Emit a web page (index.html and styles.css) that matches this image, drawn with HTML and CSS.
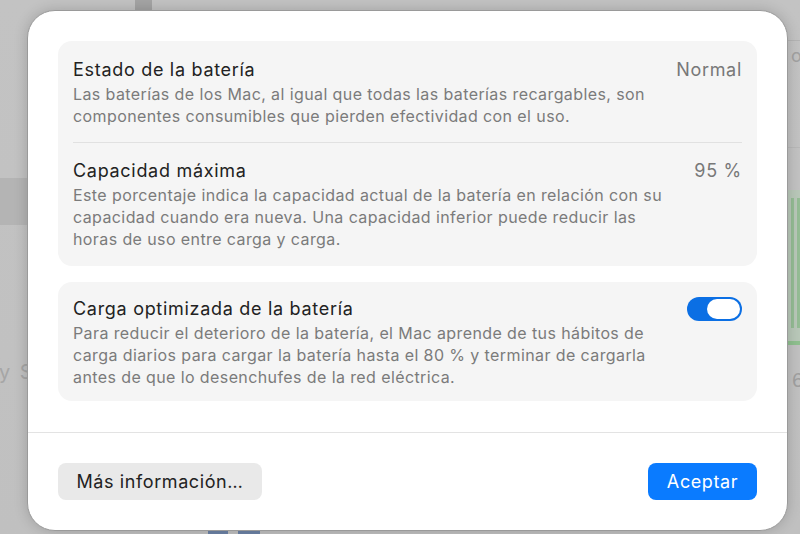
FILE: index.html
```html
<!DOCTYPE html>
<html lang="es">
<head>
<meta charset="utf-8">
<title>Estado de la batería</title>
<link rel="stylesheet" href="styles.css">
</head>
<body>
<div class="backdrop">
  <div class="bg-top-block"></div>
  <div class="bg-left-band"></div>
  <div class="bg-left-text">y S</div>
  <div class="bg-right-o">o</div>
  <div class="bg-right-line1"></div>
  <div class="bg-right-line2"></div>
  <div class="bg-right-green"><span></span><span></span></div>
  <div class="bg-right-6">6</div>
  <div class="bg-bottom-a"></div>
  <div class="bg-bottom-b"></div>
</div>

<div class="dialog">
  <div class="content">
    <section class="card card-first">
      <div class="row">
        <div class="text">
          <div class="title">Estado de la batería</div>
          <div class="desc">Las baterías de los Mac, al igual que todas las baterías recargables, son<br>componentes consumibles que pierden efectividad con el uso.</div>
        </div>
        <div class="value">Normal</div>
      </div>
      <div class="sep"></div>
      <div class="row">
        <div class="text">
          <div class="title">Capacidad máxima</div>
          <div class="desc">Este porcentaje indica la capacidad actual de la batería en relación con su<br>capacidad cuando era nueva. Una capacidad inferior puede reducir las<br>horas de uso entre carga y carga.</div>
        </div>
        <div class="value">95 %</div>
      </div>
    </section>
    <section class="card card-second">
      <div class="row">
        <div class="text">
          <div class="title">Carga optimizada de la batería</div>
          <div class="desc">Para reducir el deterioro de la batería, el Mac aprende de tus hábitos de<br>carga diarios para cargar la batería hasta el 80 % y terminar de cargarla<br>antes de que lo desenchufes de la red eléctrica.</div>
        </div>
        <div class="toggle"><div class="knob"></div></div>
      </div>
    </section>
  </div>
  <div class="footer">
    <button class="btn btn-secondary">Más información…</button>
    <button class="btn btn-primary">Aceptar</button>
  </div>
</div>
</body>
</html>
```

FILE: styles.css
```css
html, body {
  margin: 0;
  padding: 0;
}
body {
  width: 800px;
  height: 534px;
  overflow: hidden;
  position: relative;
  background: linear-gradient(180deg, #c3c3c3 0%, #c0c0c0 100%);
  font-family: "Inter", "Liberation Sans", sans-serif;
  padding-top: 10px;
  box-sizing: border-box;
}

/* blurred app behind the sheet */
.backdrop {
  position: absolute;
  inset: 0;
  z-index: 0;
}
.bg-top-block { position: absolute; left: 135px; top: 0; width: 17px; height: 10px; background: #a4a4a4; }
.bg-left-band { position: absolute; left: 0; top: 178px; width: 30px; height: 47px; background: #b4b4b4; }
.bg-left-text { position: absolute; left: -1px; top: 360px; font-size: 20px; color: #a6a6a6; letter-spacing: 2px; }
.bg-right-o { position: absolute; left: 791px; top: 45px; font-size: 18px; color: #a2a2a2; }
.bg-right-line1 { position: absolute; left: 780px; top: 40px; width: 20px; height: 1px; background: #b4b4b4; }
.bg-right-line2 { position: absolute; left: 780px; top: 147px; width: 20px; height: 1px; background: #b8b8b8; }
.bg-right-green {
  position: absolute; left: 780px; top: 190px; width: 20px; height: 155px;
  background: #b9c8b9; border-bottom: 4px solid #8fc08f;
  display: flex; gap: 3px; padding-left: 11px; box-sizing: border-box; padding-top: 8px;
}
.bg-right-green span { display: block; width: 3px; height: 130px; background: #95bd95; }
.bg-right-6 { position: absolute; left: 792px; top: 369px; font-size: 19px; color: #a0a0a0; }
.bg-bottom-a { position: absolute; left: 208px; top: 528px; width: 20px; height: 6px; background: #6c82a6; }
.bg-bottom-b { position: absolute; left: 238px; top: 528px; width: 22px; height: 6px; background: #6c82a6; }

/* sheet */
.dialog {
  position: relative;
  z-index: 1;
  margin-left: 27px;
  width: 761px;
  height: 521px;
  box-sizing: border-box;
  background: #ffffff;
  border: 1px solid #9a9a9a;
  border-radius: 28px;
  box-shadow: 0 0 14px rgba(0, 0, 0, 0.18);
  display: flex;
  flex-direction: column;
}
.content {
  padding: 30px 30px 0;
  display: flex;
  flex-direction: column;
  gap: 16px;
}
.card {
  background: #f5f5f5;
  border-radius: 14px;
  padding: 0 15px;
}
.card-first { padding-top: 16px; padding-bottom: 16px; }
.card-second { padding-top: 14px; padding-bottom: 13px; }

.row {
  display: flex;
  justify-content: space-between;
  align-items: flex-start;
}
.title {
  font-size: 18px;
  line-height: 26px;
  letter-spacing: 0.7px;
  color: #222222;
}
.desc {
  font-size: 16px;
  line-height: 22px;
  letter-spacing: 0.4px;
  color: #7b7b7b;
}
.value {
  font-size: 18px;
  line-height: 26px;
  letter-spacing: 0.7px;
  color: #787878;
}
.sep {
  height: 1px;
  background: #e1e1e1;
  margin: 15px 0 15px;
}

.toggle {
  margin-top: 1px;
  width: 55px;
  height: 24px;
  border-radius: 12px;
  background: #0b6fe4;
  display: flex;
  justify-content: flex-end;
  align-items: center;
  padding: 0 2px;
  box-sizing: border-box;
}
.knob {
  width: 33px;
  height: 20px;
  border-radius: 10px;
  background: #ffffff;
}

.footer {
  margin-top: 31px;
  border-top: 1px solid #e3e3e3;
  padding: 30px 30px 0;
  display: flex;
  justify-content: space-between;
}
.btn {
  font-family: "Inter", "Liberation Sans", sans-serif;
  font-size: 18px;
  letter-spacing: 0.6px;
  height: 37px;
  border: none;
  border-radius: 8px;
  padding: 0;
  line-height: 37px;
}
.btn-secondary {
  background: #e9e9e9;
  color: #222222;
  width: 204px;
}
.btn-primary {
  background: #0a7bff;
  color: #ffffff;
  width: 109px;
}
```
